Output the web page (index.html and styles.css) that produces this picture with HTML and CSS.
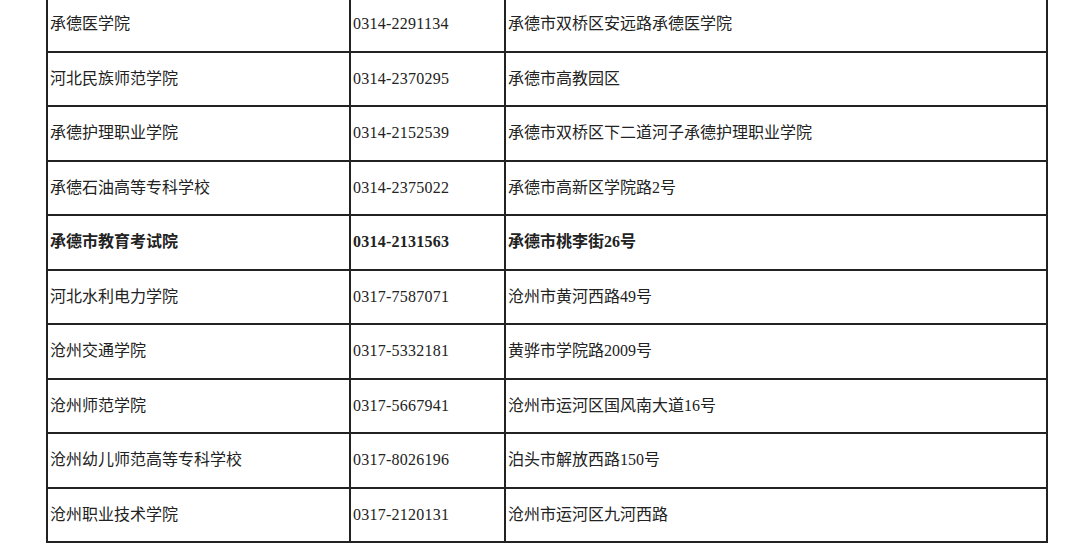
FILE: index.html
```html
<!DOCTYPE html>
<html lang="zh">
<head>
<meta charset="utf-8">
<link rel="stylesheet" href="styles.css">
</head>
<body>
<table class="contacts">
  <colgroup>
    <col class="c-name">
    <col class="c-phone">
    <col class="c-addr">
  </colgroup>
  <tbody>
    <tr><td>承德医学院</td><td class="phone">0314-2291134</td><td>承德市双桥区安远路承德医学院</td></tr>
    <tr><td>河北民族师范学院</td><td class="phone">0314-2370295</td><td>承德市高教园区</td></tr>
    <tr><td>承德护理职业学院</td><td class="phone">0314-2152539</td><td>承德市双桥区下二道河子承德护理职业学院</td></tr>
    <tr><td>承德石油高等专科学校</td><td class="phone">0314-2375022</td><td>承德市高新区学院路2号</td></tr>
    <tr class="bold"><td>承德市教育考试院</td><td class="phone">0314-2131563</td><td>承德市桃李街26号</td></tr>
    <tr><td>河北水利电力学院</td><td class="phone">0317-7587071</td><td>沧州市黄河西路49号</td></tr>
    <tr><td>沧州交通学院</td><td class="phone">0317-5332181</td><td>黄骅市学院路2009号</td></tr>
    <tr><td>沧州师范学院</td><td class="phone">0317-5667941</td><td>沧州市运河区国风南大道16号</td></tr>
    <tr><td>沧州幼儿师范高等专科学校</td><td class="phone">0317-8026196</td><td>泊头市解放西路150号</td></tr>
    <tr><td>沧州职业技术学院</td><td class="phone">0317-2120131</td><td>沧州市运河区九河西路</td></tr>
  </tbody>
</table>
</body>
</html>
```
FILE: styles.css
```css
html, body {
  margin: 0;
  padding: 0;
  background: #ffffff;
}
.contacts {
  border-collapse: collapse;
  table-layout: fixed;
  width: 1000px;
  margin-top: -4px;
  margin-left: 46px;
  font-family: "Liberation Serif", "Noto Sans CJK SC", serif;
  font-size: 16px;
  color: #222222;
}
.c-name { width: 303px; }
.c-phone { width: 155px; }
.c-addr { width: 542px; }
.contacts td {
  border: 2px solid #222222;
  height: 54.5px;
  padding: 0 2px;
  box-sizing: border-box;
  vertical-align: middle;
  white-space: nowrap;
  line-height: 20px;
}
.contacts td.phone {
  letter-spacing: 0.25px;
}
.bold td {
  font-weight: bold;
}
```
